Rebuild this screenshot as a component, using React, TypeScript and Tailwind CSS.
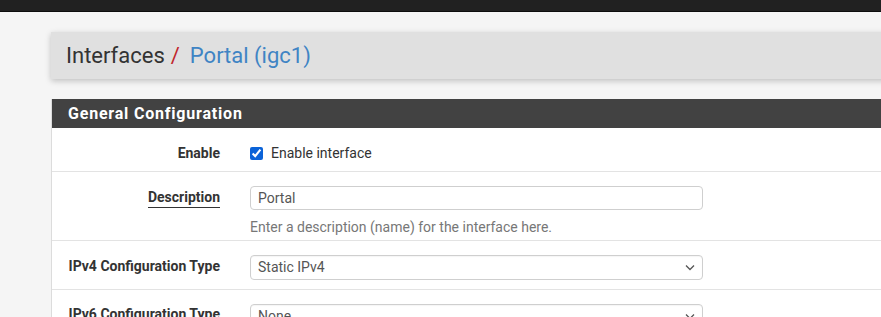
import React from 'react';

// Fila del formulario: etiqueta a la izquierda, control a la derecha
const Row: React.FC<{ label: React.ReactNode; children: React.ReactNode; className?: string }> = ({ label, children, className }) => (
  <div className={`flex border-b border-[#e3e3e3] ${className ?? ''}`}>
    <div className="w-[183px] shrink-0 pr-[15px] text-right text-[14px] font-bold text-[#333]">{label}</div>
    <div className="pl-[15px]">{children}</div>
  </div>
);

const Chevron = () => (
  <svg className="pointer-events-none absolute right-[8px] top-[9px]" width="10" height="7" viewBox="0 0 10 7">
    <path d="M1 1.5 L5 5.5 L9 1.5" fill="none" stroke="#555" strokeWidth="1.3" />
  </svg>
);

const SelectBox: React.FC<{ value: string }> = ({ value }) => (
  <div className="relative w-[453px]">
    <div className="h-[25px] rounded-[4px] border border-[#cfcfcf] bg-white px-[7px] text-[14px] leading-[23px] text-[#555] shadow-[inset_0_1px_1px_rgba(0,0,0,0.04)]">
      {value}
    </div>
    <Chevron />
  </div>
);

export default function App() {
  return (
    <div className="h-[317px] overflow-hidden bg-[#f5f5f5] font-['Roboto',sans-serif]">
      {/* barra superior */}
      <div className="h-[12px] border-b border-[#0d0d0d] bg-[#212121]" />

      <div className="pl-[51px]">
        {/* migas */}
        <div className="mt-[20px] flex h-[47px] w-[900px] items-center bg-[#e0e0e0] pl-[15px] text-[22px] shadow-[0_2px_6px_rgba(0,0,0,0.22)]">
          <span className="text-[#333]">Interfaces</span>
          <span className="ml-[6px] text-[#c1272d]">/</span>
          <span className="ml-[10px] text-[#3f84c4]">Portal (igc1)</span>
        </div>

        {/* panel */}
        <div className="mt-[20px] w-[900px] border-l border-[#dcdcdc] bg-white">
          <div className="flex h-[29px] items-center bg-[#424242] pl-[16px] text-[16px] font-bold tracking-[0.8px] text-white">
            General Configuration
          </div>

          <Row label={<span className="mt-[15px] inline-block leading-[20px]">Enable</span>} className="h-[44px]">
            <label className="mt-[15px] flex h-[20px] items-center gap-[8px] text-[14px] text-[#333]">
              <input type="checkbox" defaultChecked className="h-[13px] w-[13px] accent-[#0b63d8]" />
              Enable interface
            </label>
          </Row>

          <Row
            label={<span className="mt-[16px] inline-block border-b border-[#333] leading-[19px]">Description</span>}
            className="h-[69px]"
          >
            <div className="pt-[14px]">
              <div className="h-[24px] w-[453px] rounded-[4px] border border-[#cfcfcf] px-[7px] text-[14px] leading-[22px] text-[#555]">
                Portal
              </div>
              <div className="mt-[7px] text-[14px] text-[#777]">Enter a description (name) for the interface here.</div>
            </div>
          </Row>

          <Row label={<span className="mt-[15px] inline-block leading-[20px]">IPv4 Configuration Type</span>} className="h-[49px]">
            <div className="pt-[14px]">
              <SelectBox value="Static IPv4" />
            </div>
          </Row>

          <Row label={<span className="mt-[14px] inline-block leading-[20px]">IPv6 Configuration Type</span>} className="h-[49px]">
            <div className="pt-[14px]">
              <SelectBox value="None" />
            </div>
          </Row>
        </div>
      </div>
    </div>
  );
}
